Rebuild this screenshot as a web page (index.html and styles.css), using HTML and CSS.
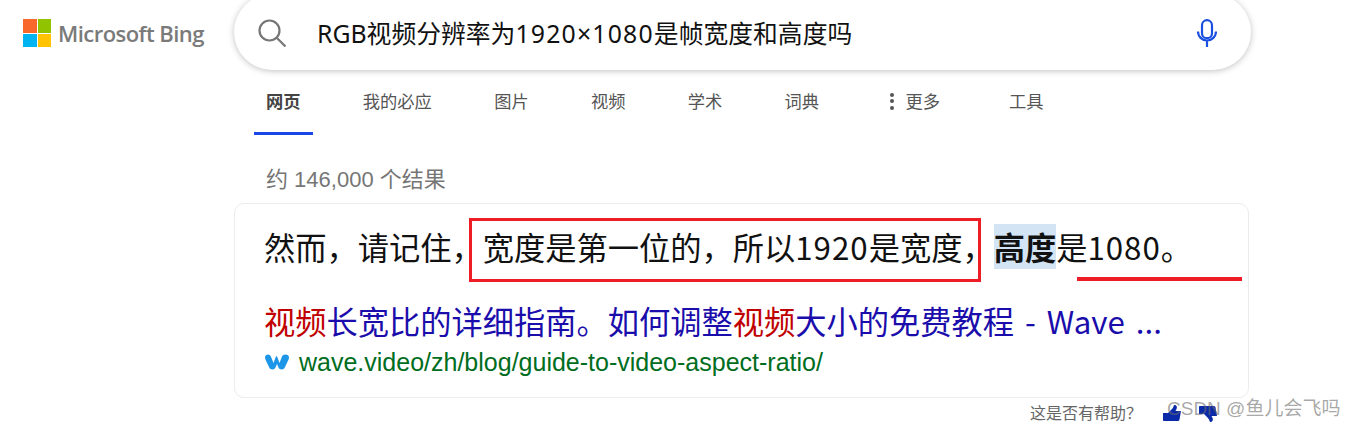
FILE: index.html
```html
<!DOCTYPE html>
<html lang="zh">

<head>
  <meta charset="UTF-8">
  <title>RGB视频分辨率为1920×1080是帧宽度和高度吗 - 搜索</title>

  <link rel="stylesheet" href="styles.css">
</head>

<body>

  <header class="top">
    <a class="logo" href="#">
      <span class="logo-grid">
        <i class="sq-red"></i><i class="sq-green"></i><i class="sq-blue"></i><i class="sq-yellow"></i>
      </span>
      <span class="logo-text">Microsoft Bing</span>
    </a>

    <div class="search">
      <svg class="search-icon" width="28" height="28" viewBox="0 0 28 28" fill="none" stroke="#767676" stroke-width="2.200">
        <circle cx="11.500" cy="11.500" r="10"/>
        <path d="M18.700 18.700L27.500 27.500"/>
      </svg>
      <span class="query">RGB视频分辨率为<span class="query-num">1920×1080</span>是帧宽度和高度吗</span>
      <svg class="mic-icon" width="20" height="28" viewBox="0 0 20 28" fill="none" stroke="#1a4fe0" stroke-width="2.200">
        <rect x="5" y="1.200" width="10" height="18" rx="5"/>
        <path d="M1 12.500a9 9 0 0 0 18 0M10 22v6"/>
      </svg>
    </div>
  </header>

  <nav class="tabs">
    <a class="tab tab-active" href="#">网页</a>
    <a class="tab" href="#">我的必应</a>
    <a class="tab" href="#">图片</a>
    <a class="tab" href="#">视频</a>
    <a class="tab" href="#">学术</a>
    <a class="tab" href="#">词典</a>
    <a class="tab tab-more" href="#"><span class="dots"><i></i><i></i><i></i></span>更多</a>
    <a class="tab" href="#">工具</a>
  </nav>

  <main class="results">
    <p class="count">约 146,000 个结果</p>

    <section class="card">
      <p class="answer">然而，请记住，<span class="boxed">宽度是第一位的，所以<span class="num">1920</span>是宽度，</span><mark class="hit">高度</mark>是<span class="underlined"><span class="num">1080</span>。</span></p>

      <a class="title" href="#"><em>视频</em>长宽比的详细指南。如何调整<em>视频</em>大小的免费教程 - Wave ...</a>

      <div class="source">
        <svg width="24" height="16" viewBox="0 0 24 16" fill="#1e96e8">
          <path d="M0 3.500C0 1.500 1.500 .5 3 .5c1.600 0 2.500 1 3.200 2.800L8.500 9l2-5.500C11 2 12 1.500 12.500 3.500l2 5.500 2.300-6C17.500 1.200 18.800.5 20.500.5 22.500.5 24 1.800 24 3.500c0 1-.4 2-1 3.200l-3 6.300C19.200 14.800 18 15.500 16.500 15.500c-1.400 0-2.500-.7-3-2L12 10l-1.500 3.500c-.6 1.300-1.600 2-3 2-1.500 0-2.700-.7-3.500-2.500L1 6.700C.4 5.500 0 4.500 0 3.500z"/>
        </svg>
        <cite class="url">wave.video/zh/blog/guide-to-video-aspect-ratio/</cite>
      </div>
    </section>

    <div class="feedback">
      <span>这是否有帮助？</span>
      <svg class="thumb-up" width="18" height="16" viewBox="0 0 18 16" fill="#0a2aa8">
        <path d="M0 8h5l3.500-3.500C10 3 10.500 1.500 11 0c2.500-.3 3.500 2 2.500 4L12.500 6H18l-1.500 8.500c-.2 1-1 1.500-2 1.500H1c-.6 0-1-.4-1-1z"/>
      </svg>
      <svg class="thumb-down" width="18" height="16" viewBox="0 0 18 16" fill="#0a2aa8">
        <path d="M0 8h5l3.500-3.500C10 3 10.500 1.500 11 0c2.500-.3 3.500 2 2.500 4L12.500 6H18l-1.500 8.500c-.2 1-1 1.500-2 1.500H1c-.6 0-1-.4-1-1z"/>
      </svg>
    </div>
  </main>

  <div class="watermark">CSDN @鱼儿会飞吗</div>

</body>

</html>
```

FILE: styles.css
```css
html,
body {
  height: 427px;
  overflow: hidden;
}

body {
  margin: 0;
  background-color: #ffffff;
  font-family: "Noto Sans CJK SC", "Open Sans", sans-serif;
  color: #111;
  position: relative;
}

a {
  text-decoration: none;
  color: inherit;
}

p {
  margin: 0;
}

.top {
  display: flex;
  align-items: flex-start;
  margin-top: -6px;
}

.logo {
  width: 234px;
  flex: none;
  box-sizing: border-box;
  padding: 25px 0 0 23px;
  display: flex;
  align-items: center;
  gap: 7px;
}

.logo-grid {
  display: grid;
  grid-template-columns: 13.500px 13.500px;
  grid-template-rows: 13.500px 13.500px;
  gap: 1px;
}

.logo-grid i {
  display: block;
}

.sq-red {
  background: #f8682c;
}

.sq-green {
  background: #91c300;
}

.sq-blue {
  background: #00b4f1;
}

.sq-yellow {
  background: #ffc300;
}

.logo-text {
  font-family: "Open Sans", sans-serif;
  font-weight: 600;
  font-size: 22px;
  line-height: 28px;
  letter-spacing: -0.55px;
  color: #7a7a7a;
}

.search {
  width: 1017px;
  height: 76px;
  box-sizing: border-box;
  border-radius: 38px;
  background: #fff;
  box-shadow: 0 1px 6px rgba(32, 33, 36, 0.28);
  display: flex;
  align-items: center;
  padding: 2px 34px 0 24px;
}

.search-icon {
  flex: none;
}

.query {
  flex: 1;
  margin-left: 31px;
  font-size: 24.800px;
  line-height: 32px;
  font-family: "Noto Sans", "Noto Sans CJK SC", sans-serif;
  color: #111;
}

.query-num {
  letter-spacing: 1.200px;
}

.mic-icon {
  flex: none;
}

.tabs {
  display: flex;
  margin: 0 0 0 254px;
  height: 65px;
  font-size: 17.250px;
  color: #555;
}

.tab {
  height: 62px;
  display: flex;
  align-items: center;
  padding: 0 12px;
  margin-right: 38.300px;
  line-height: 24px;
  white-space: nowrap;
}

.tab-active {
  font-weight: 700;
  color: #444;
  border-bottom: 3px solid #1a47e5;
}

.tab-more {
  margin-left: 9px;
  margin-right: 45px;
}

.dots {
  display: inline-flex;
  flex-direction: column;
  gap: 2.500px;
  margin-right: 11px;
}

.dots i {
  display: block;
  width: 4px;
  height: 4px;
  border-radius: 50%;
  background: #555;
}

.results {
  margin-left: 234px;
  width: 1016px;
}

.count {
  margin: 31px 0 0 32px;
  font-family: "Liberation Sans", "Noto Sans CJK SC", sans-serif;
  font-size: 22px;
  line-height: 28px;
  color: #767676;
}

.card {
  margin: 9px 1px 0 0;
  box-sizing: border-box;
  height: 195px;
  padding: 21px 0 0 29px;
  border: 1px solid #ececec;
  border-radius: 10px;
}

.answer {
  font-size: 31.250px;
  line-height: 44px;
  white-space: nowrap;
  color: #111;
}

.num {
  letter-spacing: 1px;
}

.boxed {
  position: relative;
}

.boxed::after {
  content: "";
  position: absolute;
  left: -14px;
  right: 13px;
  top: -6px;
  bottom: -13px;
  border: 3px solid #ee1c25;
}

.hit {
  background: #d3e4f4;
  color: #111;
  font-weight: 700;
}

.underlined {
  position: relative;
}

.underlined::after {
  content: "";
  position: absolute;
  left: -10px;
  right: -50px;
  bottom: -12px;
  height: 4px;
  background: #ee1c25;
}

.title {
  display: block;
  margin-top: 33px;
  font-size: 31.250px;
  line-height: 38px;
  word-spacing: 4px;
  color: #1a0dab;
  white-space: nowrap;
}

.title em {
  font-style: normal;
  color: #c00000;
}

.source {
  display: flex;
  align-items: center;
  gap: 10px;
  margin-top: 7px;
}

.source svg {
  margin-left: 1px;
}

.url {
  font-family: "Liberation Sans", sans-serif;
  font-style: normal;
  font-size: 25px;
  line-height: 30px;
  color: #006d21;
}

.feedback {
  display: flex;
  align-items: center;
  justify-content: flex-end;
  margin-top: 3px;
  padding-right: 33px;
  font-size: 16px;
  line-height: 22px;
  color: #666;
}

.thumb-up {
  margin-left: 21px;
  margin-top: 2px;
}

.thumb-down {
  margin-left: 18px;
  margin-top: 3px;
  transform: rotate(180deg) scaleX(-1);
}

.watermark {
  position: absolute;
  left: 1167px;
  top: 394px;
  font-family: "Liberation Sans", "Noto Sans CJK SC", sans-serif;
  font-size: 19px;
  line-height: 30px;
  color: rgba(110, 110, 110, 0.6);
}
```
